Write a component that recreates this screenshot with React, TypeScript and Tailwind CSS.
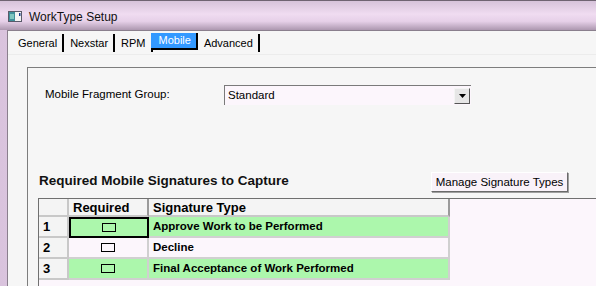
import React from "react";

const rows = [
  { n: 1, label: "Approve Work to be Performed", green: true, focus: true },
  { n: 2, label: "Decline", green: false, focus: false },
  { n: 3, label: "Final Acceptance of Work Performed", green: true, focus: false },
];

const tabs = ["General", "Nexstar", "RPM", "Mobile", "Advanced"];

function WindowIcon() {
  return (
    <svg width="14" height="11" viewBox="0 0 14 11">
      <rect x="0.5" y="0.5" width="13" height="10" fill="#f4f4f4" stroke="#5a5a6a" />
      <rect x="1" y="1" width="6" height="9" fill="#3f8f9a" />
      <rect x="2" y="3" width="4" height="5" fill="#7fc6c0" />
      <rect x="11" y="2" width="1.5" height="3" fill="#1a3a8a" />
    </svg>
  );
}

export default function App() {
  return (
    <div className="relative h-[286px] w-[596px] overflow-hidden bg-[linear-gradient(90deg,#d9c3dd,#ecd6ee_30%,#dcc6e0_60%,#eed8f0_85%,#d7c2db)] font-['Liberation_Sans',Arial,sans-serif] text-black">
      {/* title bar */}
      <div className="flex h-[30px] items-center gap-[7px] border-t border-[#6f6472] bg-[linear-gradient(180deg,#d6c3da_0%,#f0dcf1_45%,#e6d0e8_70%,#ad98b0_100%)] pl-[8px] pt-[2px]">
        <WindowIcon />
        <span className="text-[12px] leading-none text-[#111]">WorkType Setup</span>
      </div>

      {/* client area */}
      <div className="ml-[7px] flex h-[256px] flex-col border-l border-t border-[#8a7f8d] bg-[#f6f6f6]">
        {/* tabs */}
        <div className="flex h-[23px] items-start pl-[4px] pt-[2px] text-[11px]">
          {tabs.map((t) =>
            t === "Mobile" ? (
              <div
                key={t}
                className="ml-[-2px] flex h-[17px] items-center border-b-2 border-r-2 border-black bg-[#3399ff] pl-[8px] pr-[5px] text-white"
              >
                {t}
              </div>
            ) : (
              <div
                key={t}
                className="mt-[1px] flex h-[18px] items-center border-r-2 border-black pl-[6px] pr-[5px]"
              >
                {t}
              </div>
            ),
          )}
        </div>

        {/* tab page */}
        <div className="flex-1 border-t border-[#ececec] pl-[19px] pt-[12px]">
          <div className="flex h-full flex-col border-l border-t border-[#7d7d7d]">
            {/* fragment group */}
            <div className="mt-[17px] flex items-center pl-[17px]">
              <span className="w-[179px] text-[11.5px]">Mobile Fragment Group:</span>
              <div className="flex h-[20px] w-[247px] items-center border-l border-t border-[#7a7a7a] border-b-[#e4e4e4] border-r-[#e4e4e4] bg-[#fcf6fc] pr-[1px]">
                <span className="flex-1 pl-[3px] text-[11.5px]">Standard</span>
                <div className="flex h-[16px] w-[16px] items-center justify-center border border-[#f4f4f4] border-b-[#555] border-r-[#555] bg-[#e6e6e6]">
                  <svg width="7" height="4" viewBox="0 0 7 4">
                    <path d="M0 0h7L3.5 4z" fill="#000" />
                  </svg>
                </div>
              </div>
            </div>

            {/* heading + button */}
            <div className="mt-[66px] flex items-end justify-between pl-[11px] pr-[28px]">
              <span className="mb-[1px] text-[13.5px] font-bold text-[#111]">
                Required Mobile Signatures to Capture
              </span>
              <button className="flex h-[20px] w-[137px] items-center justify-center border border-[#fff] border-b-[#6a6a6a] border-r-[#6a6a6a] bg-[#f9f2f9] text-[11.5px] shadow-[1px_1px_0_#a0a0a0]">
                Manage Signature Types
              </button>
            </div>

            {/* grid */}
            <div className="ml-[10px] mt-[6px] flex-1 border-l border-t border-[#707070] bg-[#fcf6fc]">
              <div className="w-[411px] text-[11.5px] font-bold">
                <div className="flex h-[18px] bg-[#f4f4f4] text-[13px]">
                  <div className="w-[30px] border-b-2 border-r-2 border-[#c8c8c8]" />
                  <div className="flex w-[80px] items-end border-b-2 border-r-2 border-b-[#c8c8c8] border-r-[#9a9a9a] pl-[4px] leading-[15px]">
                    Required
                  </div>
                  <div className="flex flex-1 items-end border-b-2 border-r-2 border-b-[#c8c8c8] border-r-[#9a9a9a] pl-[4px] leading-[15px]">
                    Signature Type
                  </div>
                </div>
                {rows.map((r) => (
                  <div key={r.n} className="flex h-[21px]">
                    <div className="flex w-[30px] items-center border-b-2 border-r-2 border-[#c8c8c8] bg-[#f4f4f4] pl-[4px] text-[13px]">
                      {r.n}
                    </div>
                    <div
                      className={`flex w-[80px] items-center justify-center ${
                        r.focus ? "border-2 border-black" : "border-b-2 border-r-2 border-[#d0d0d0]"
                      } ${r.green ? "bg-[#acf7ac]" : "bg-[#fcf6fc]"}`}
                    >
                      <div className="h-[9px] w-[14px] border border-black" />
                    </div>
                    <div
                      className={`flex flex-1 items-center border-b-2 border-r-2 border-[#d0d0d0] pl-[4px] ${
                        r.green ? "bg-[#acf7ac]" : "bg-[#fcf6fc]"
                      }`}
                    >
                      {r.label}
                    </div>
                  </div>
                ))}
              </div>
            </div>
          </div>
        </div>
      </div>
    </div>
  );
}
